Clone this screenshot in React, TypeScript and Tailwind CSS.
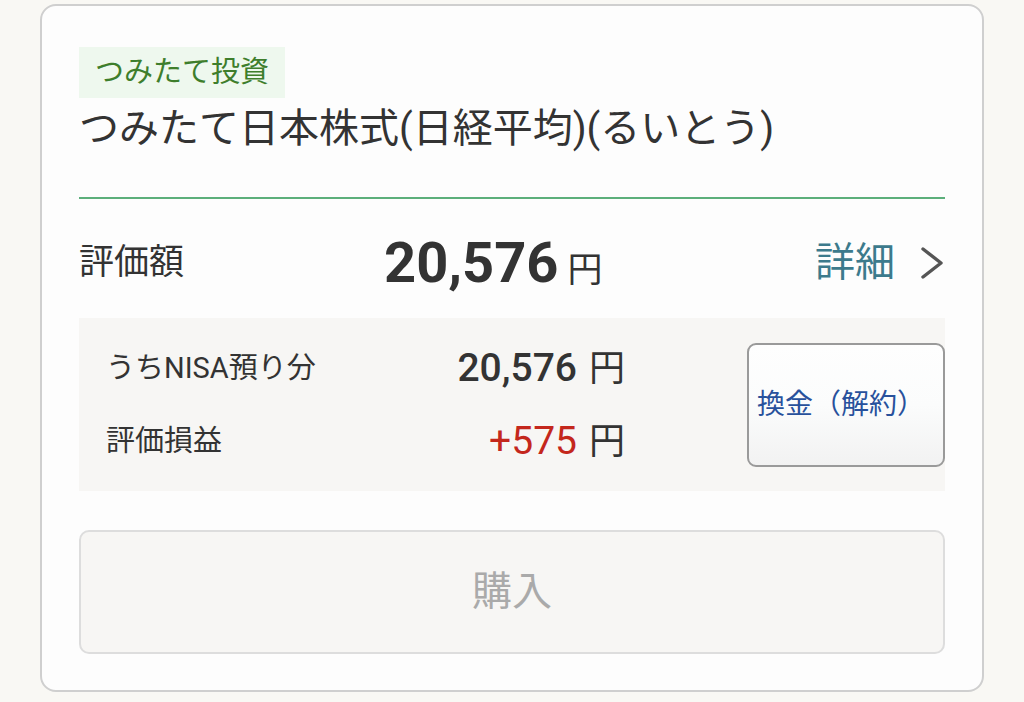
import React from "react";

export default function App() {
  const font = { fontFamily: '"Roboto", "Noto Sans CJK JP", sans-serif' };
  return (
    <div className="w-[1024px] h-[702px] bg-[#f9f8f4] overflow-hidden" style={font}>
      <div className="ml-[40px] mt-[4px] w-[944px] h-[688px] bg-[#fdfdfd] border-2 border-[#cfcfcf] rounded-[16px] px-[37px] pt-[41px]">
        <div className="inline-flex items-center h-[51px] px-[16px] bg-[#eef8ee] text-[#3e7e2c] text-[29px] leading-none">
          つみたて投資
        </div>
        <div className="mt-[8px] text-[40px] leading-[46px] text-[#333333]">
          つみたて日本株式(日経平均)(るいとう)
        </div>
        <div className="mt-[45px] h-[2px] bg-[#5caf7b]" />
        <div className="h-[119px] pt-[8px] flex items-center">
          <div className="w-[305px] text-[35px] text-[#333333] leading-none">評価額</div>
          <div className="flex items-baseline">
            <span className="text-[56px] font-bold text-[#333333] leading-none">20,576</span>
            <span className="ml-[9px] text-[35px] text-[#333333] leading-none">円</span>
          </div>
          <div className="ml-auto flex items-center">
            <span className="text-[40px] text-[#3c7a8c] leading-none">詳細</span>
            <svg className="ml-[24px]" width="26" height="36" viewBox="0 0 26 36">
              <path d="M4 4 L22 18 L4 32" fill="none" stroke="#555555" strokeWidth="3.4" strokeLinecap="round" strokeLinejoin="round" />
            </svg>
          </div>
        </div>
        <div className="h-[173px] bg-[#f7f6f4] flex items-center pl-[27px]">
          <div className="w-[519px] flex flex-col gap-[33px]">
            <div className="flex items-center h-[40px]">
              <span className="text-[29px] text-[#333333] leading-none">うちNISA預り分</span>
              <span className="ml-auto flex items-baseline">
                <span className="text-[39px] font-medium text-[#333333] leading-none">20,576</span>
                <span className="ml-[12px] text-[36px] text-[#333333] leading-none">円</span>
              </span>
            </div>
            <div className="flex items-center h-[40px]">
              <span className="text-[29px] text-[#333333] leading-none">評価損益</span>
              <span className="ml-auto flex items-baseline">
                <span className="text-[39px] text-[#c4271c] leading-none">+575</span>
                <span className="ml-[12px] text-[36px] text-[#333333] leading-none">円</span>
              </span>
            </div>
          </div>
          <div className="ml-auto w-[198px] h-[124px] border-2 border-[#9a9a9a] rounded-[9px] bg-gradient-to-b from-[#fefefe] via-[#fbfcfc] to-[#f2f2f2] flex items-center text-[28px] text-[#28519c] leading-none pl-[8px] whitespace-nowrap">
            換金（解約）
          </div>
        </div>
        <div className="mt-[39px] h-[124px] border-2 border-[#dddddd] rounded-[10px] bg-[#f7f6f4] flex items-center justify-center text-[40px] text-[#aaaaaa] leading-none">
          購入
        </div>
      </div>
    </div>
  );
}
